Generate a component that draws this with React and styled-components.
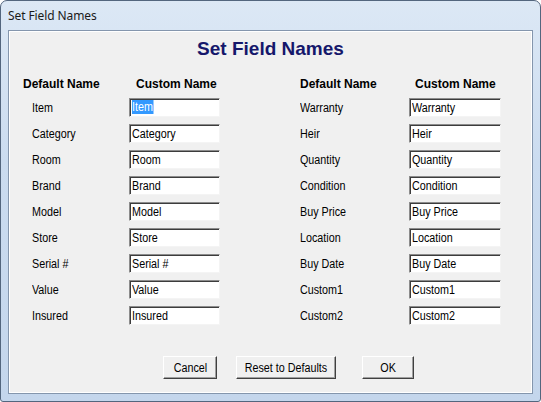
import styled, { createGlobalStyle } from 'styled-components'

const GlobalStyle = createGlobalStyle`
  html, body {
    margin: 0;
    padding: 0;
    background: #ffffff;
  }
  * { box-sizing: border-box; }
`

const Window = styled.div`
  width: 541px;
  height: 402px;
  display: flex;
  flex-direction: column;
  padding: 0 7px 7px 7px;
  border: 1px solid #53667e;
  border-radius: 7px 7px 3px 3px;
  background: linear-gradient(180deg, #dce8f5 0%, #cbdcf0 40%, #c4d6ec 100%);
  font-family: 'Liberation Sans', Arial, sans-serif;
`

const TitleBar = styled.div`
  height: 29px;
  display: flex;
  align-items: center;
  font-family: 'Noto Sans', 'Open Sans', sans-serif;
  font-size: 12px;
  color: #1a1a1a;
  letter-spacing: -0.1px;
`

const Client = styled.div`
  flex: 1;
  display: flex;
  flex-direction: column;
  border: 1px solid #8496ad;
  box-shadow: inset 0 0 0 1px #ffffff;
  background: #f0f0f0;
  padding: 7px 0 0 0;
`

const Heading = styled.h1`
  margin: 0;
  text-align: center;
  font-size: 19px;
  line-height: 22px;
  font-weight: 700;
  color: #15176b;
`

const Columns = styled.div`
  display: flex;
  gap: 80px;
  padding-left: 14px;
  margin-top: 17px;
`

const FieldGroup = styled.div`
  display: grid;
  grid-template-columns: ${p => p.labelWidth}px ${p => p.inputWidth}px;
  row-gap: 7px;
  align-items: center;
`

const ColHead = styled.div`
  font-size: 12px;
  font-weight: 700;
  line-height: 15px;
  color: #000;
  padding-left: ${p => p.indent || 0}px;
  margin-bottom: -1px;
`

// the dialog font is a narrow sans; squeeze Liberation Sans to match
const Narrow = styled.span`
  display: inline-block;
  font-size: 12.5px;
  transform: scaleX(0.86);
  transform-origin: ${p => p.center ? 'center' : 'left'} center;
  white-space: nowrap;
`

const Label = styled.div`
  color: #000;
  padding-left: ${p => p.indent || 0}px;
  line-height: 15px;
`

const Field = styled.div`
  height: 19px;
  display: flex;
  align-items: center;
  padding-left: 2px;
  background: #ffffff;
  border-top: 1px solid #8c8c8c;
  border-left: 1px solid #8c8c8c;
  border-right: 1px solid #f4f4f4;
  border-bottom: 1px solid #f4f4f4;
  box-shadow: inset 1px 1px 0 #3c3c3c;
  color: #000;
  overflow: hidden;
`

const Selected = styled.span`
  background: #3399ff;
  color: #ffffff;
  line-height: 15px;
  padding-right: 1px;
`

const ButtonRow = styled.div`
  display: flex;
  padding-left: 154px;
  margin-top: 31px;
`

const Button = styled.button`
  width: ${p => p.w}px;
  height: 23px;
  margin-left: ${p => p.gap || 0}px;
  padding: 0;
  background: #f0f0f0;
  border: 1px solid;
  border-color: #ffffff #404040 #404040 #ffffff;
  box-shadow: inset -1px -1px 0 #a0a0a0;
  font-family: 'Liberation Sans', Arial, sans-serif;
  color: #000;
`

const left = ['Item', 'Category', 'Room', 'Brand', 'Model', 'Store', 'Serial #', 'Value', 'Insured']
const right = ['Warranty', 'Heir', 'Quantity', 'Condition', 'Buy Price', 'Location', 'Buy Date', 'Custom1', 'Custom2']

function Group ({ names, labelWidth, inputWidth, labelIndent, customIndent, selectFirst }) {
  return (
    <FieldGroup labelWidth={labelWidth} inputWidth={inputWidth}>
      <ColHead>Default Name</ColHead>
      <ColHead indent={customIndent}>Custom Name</ColHead>
      {names.map((n, i) => [
        <Label key={n + 'l'} indent={labelIndent}><Narrow>{n}</Narrow></Label>,
        <Field key={n + 'f'}>
          <Narrow>{selectFirst && i === 0 ? <Selected>{n}</Selected> : n}</Narrow>
        </Field>
      ])}
    </FieldGroup>
  )
}

export default function App () {
  return (
    <>
      <GlobalStyle />
      <Window>
        <TitleBar>Set Field Names</TitleBar>
        <Client>
          <Heading>Set Field Names</Heading>
          <Columns>
            <Group names={left} labelWidth={106} inputWidth={91} labelIndent={9} customIndent={7} selectFirst />
            <Group names={right} labelWidth={109} inputWidth={92} labelIndent={0} customIndent={6} />
          </Columns>
          <ButtonRow>
            <Button w={54}><Narrow center>Cancel</Narrow></Button>
            <Button w={100} gap={19}><Narrow center>Reset to Defaults</Narrow></Button>
            <Button w={52} gap={26}><Narrow center>OK</Narrow></Button>
          </ButtonRow>
        </Client>
      </Window>
    </>
  )
}
